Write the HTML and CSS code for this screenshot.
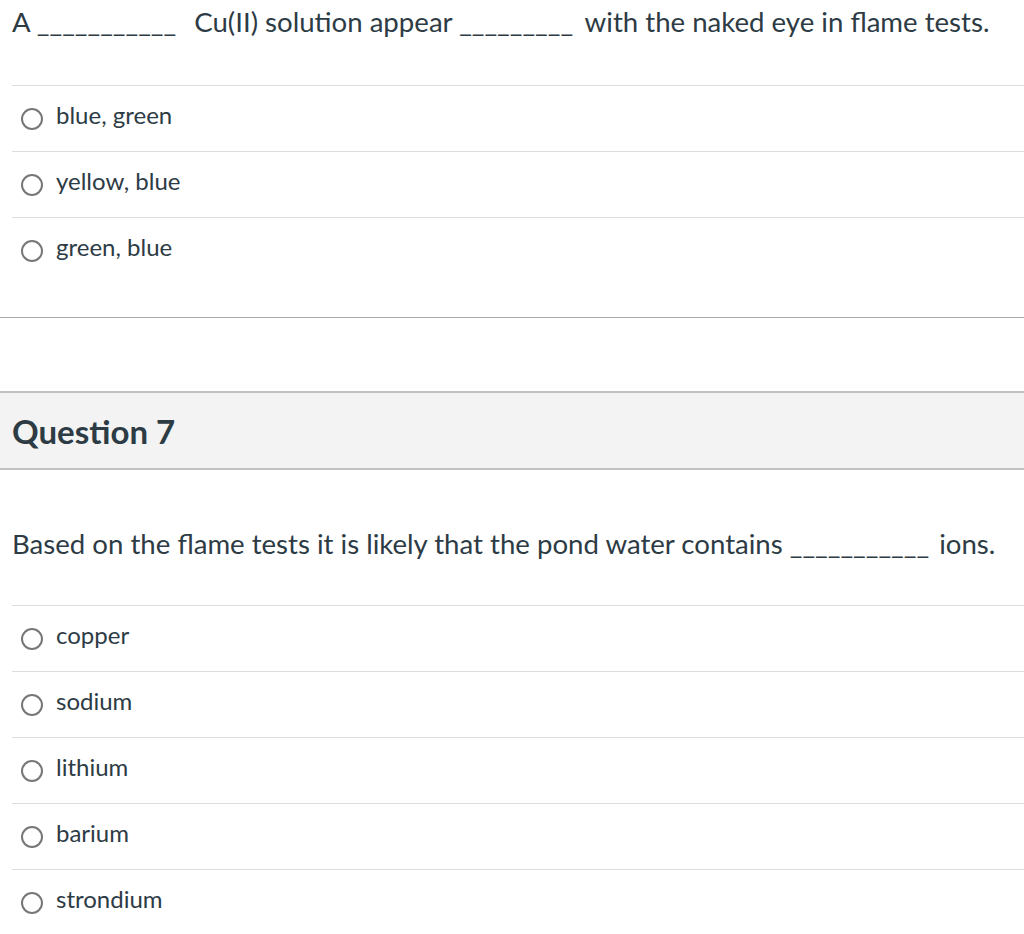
FILE: index.html
```html
<!DOCTYPE html>
<html>
<head>
<meta charset="utf-8">
<link rel="stylesheet" href="styles.css">
</head>
<body>
<div class="question">
  <div class="question-text">A <span class="blank b1">___________</span> Cu(II) solution appear <span class="blank b2">_________</span> with the naked eye in flame tests.</div>
  <div class="answers">
    <div class="answer"><span class="radio"></span><span class="label">blue, green</span></div>
    <div class="answer"><span class="radio"></span><span class="label">yellow, blue</span></div>
    <div class="answer"><span class="radio"></span><span class="label">green, blue</span></div>
  </div>
</div>
<div class="divider"></div>
<div class="question second">
  <div class="header"><h2>Question 7</h2></div>
  <div class="question-text q7">Based on the flame tests it is likely that the pond water contains <span class="blank b3">___________</span> ions.</div>
  <div class="answers">
    <div class="answer"><span class="radio"></span><span class="label">copper</span></div>
    <div class="answer"><span class="radio"></span><span class="label">sodium</span></div>
    <div class="answer"><span class="radio"></span><span class="label">lithium</span></div>
    <div class="answer"><span class="radio"></span><span class="label">barium</span></div>
    <div class="answer"><span class="radio"></span><span class="label">strondium</span></div>
  </div>
</div>
</body>
</html>
```

FILE: styles.css
```css
html, body {
  margin: 0;
  padding: 0;
  background: #ffffff;
}
body {
  font-family: Lato, "Open Sans", sans-serif;
  color: #2d3b45;
  width: 1024px;
  overflow: hidden;
}
.question-text {
  font-size: 27.6px;
  line-height: 36px;
  padding: 4px 0 0 12px;
  margin-bottom: 45px;
  white-space: nowrap;
}
.blank {
  color: #2d3b45;
}
.b1 {
  margin-right: 11px;
}
.b2 {
  margin-right: 5px;
}
.b3 {
  margin-right: 3px;
}
.answers {
  margin-left: 12px;
}
.answer {
  border-top: 1px solid #dddddd;
  height: 65px;
  display: flex;
  align-items: center;
}
.radio {
  width: 18px;
  height: 18px;
  border: 2px solid #777777;
  border-radius: 50%;
  margin-left: 9px;
  margin-right: 13px;
  flex: none;
}
.label {
  font-size: 24px;
  line-height: 30px;
  margin-bottom: 7px;
}
.divider {
  margin-top: 34px;
  border-top: 1px solid #aaaaaa;
  height: 0;
  margin-bottom: 73px;
}
.header {
  background: #f3f3f3;
  border-top: 2px solid #c1c1c1;
  border-bottom: 2px solid #c1c1c1;
  height: 75px;
  display: flex;
  align-items: center;
  padding-left: 12px;
}
.header h2 {
  margin: 0;
  font-size: 33px;
  font-weight: 700;
  line-height: 40px;
}
.question-text.q7 {
  padding-top: 56px;
  margin-bottom: 43px;
}
```
